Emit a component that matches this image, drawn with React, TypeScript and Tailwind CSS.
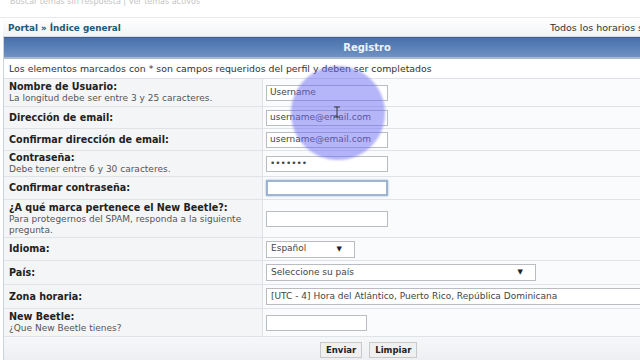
const font = { fontFamily: '"DejaVu Sans", Verdana, sans-serif' };

interface RowProps {
  label: string;
  hint?: string[];
  h: string;
  children: React.ReactNode;
}

function Row({ label, hint, h, children }: RowProps) {
  return (
    <div className={`grid grid-cols-[259px_1fr] border-b border-[#dfe3e8] ${h}`}>
      <div className="bg-[#f4f5f7] border-r border-[#dde1e6] px-[5px] flex flex-col justify-center">
        <div className="text-[9.6px] font-bold text-[#222] leading-[12px]">{label}</div>
        {hint?.map((t) => (
          <div key={t} className="text-[9px] text-[#555] leading-[11px] whitespace-nowrap">
            {t}
          </div>
        ))}
      </div>
      <div className="bg-[#fafbfc] px-[3px] flex items-center">{children}</div>
    </div>
  );
}

function Field({ value, w, focus }: { value?: string; w: string; focus?: boolean }) {
  return (
    <div
      className={`${w} h-[16px] bg-white flex items-center px-[3px] text-[9px] text-[#444] whitespace-nowrap overflow-hidden ${
        focus ? "border-2 border-[#9db4d2] shadow-[0_0_2px_#9db4d2]" : "border border-[#b9bcc0]"
      }`}
    >
      {value}
    </div>
  );
}

function Select({ value, w }: { value: string; w: string }) {
  return (
    <div className={`${w} h-[17px] bg-white border border-[#b9bcc0] flex items-center justify-between px-[4px] text-[9px] text-[#444] whitespace-nowrap overflow-hidden`}>
      <span>{value}</span>
      <span className="text-[7px] text-[#222] pr-[8px]">▼</span>
    </div>
  );
}

export default function App() {
  return (
    <div className="w-[640px] h-[360px] overflow-hidden bg-white relative" style={font}>
      <div className="h-[18px] border-b border-[#e6e8eb] overflow-hidden">
        <div className="text-[8px] text-[#c4c4c4] pl-[10px] leading-[8px] -mt-[2px]">
          Buscar temas sin respuesta | Ver temas activos
        </div>
      </div>
      <div className="w-[730px] pl-[3px]">
        <div className="h-[19px] flex items-center pt-[3px] bg-gradient-to-b from-white to-[#f1f3f6] border-b border-[#d8dde4]">
          <div className="w-[547px] pl-[5px] text-[8.8px] font-bold text-[#1d5878]">Portal » Índice general</div>
          <div className="text-[9.5px] text-[#333] whitespace-nowrap">Todos los horarios son UTC - 4 horas</div>
        </div>
        <div className="border-l border-[#ccd3dc]">
          <div className="h-[22px] flex items-center justify-center bg-gradient-to-b from-[#4a72aa] via-[#5a80b8] to-[#7192c2] border-t border-[#3c5f90] border-b-2 border-b-[#a8b8cf] text-[10px] font-bold text-[#eef3fb]">
            Registro
          </div>
          <div className="h-[20px] flex items-center pt-[2px] px-[5px] text-[9.4px] text-[#333] bg-white border-b border-[#dfe3e8]">
            Los elementos marcados con * son campos requeridos del perfil y deben ser completados
          </div>
          <Row label="Nombre de Usuario:" hint={["La longitud debe ser entre 3 y 25 caracteres."]} h="h-[28px]">
            <Field value="Username" w="w-[122px]" />
          </Row>
          <Row label="Dirección de email:" h="h-[22px]">
            <Field value="username@email.com" w="w-[122px]" />
          </Row>
          <Row label="Confirmar dirección de email:" h="h-[22px]">
            <Field value="username@email.com" w="w-[122px]" />
          </Row>
          <Row label="Contraseña:" hint={["Debe tener entre 6 y 30 caracteres."]} h="h-[26px]">
            <Field value="•••••••" w="w-[122px]" />
          </Row>
          <Row label="Confirmar contraseña:" h="h-[23px]">
            <Field w="w-[122px]" focus />
          </Row>
          <Row
            label="¿A qué marca pertenece el New Beetle?:"
            hint={["Para protegernos del SPAM, responda a la siguiente", "pregunta."]}
            h="h-[38px]"
          >
            <Field w="w-[122px]" />
          </Row>
          <Row label="Idioma:" h="h-[23px]">
            <Select value="Español" w="w-[89px]" />
          </Row>
          <Row label="País:" h="h-[24px]">
            <Select value="Seleccione su país" w="w-[270px]" />
          </Row>
          <Row label="Zona horaria:" h="h-[24px]">
            <Select value="[UTC - 4] Hora del Atlántico, Puerto Rico, República Dominicana" w="w-[400px]" />
          </Row>
          <Row label="New Beetle:" hint={["¿Que New Beetle tienes?"]} h="h-[28px]">
            <Field w="w-[101px]" />
          </Row>
          <div className="h-[26px] flex items-center bg-gradient-to-b from-[#f6f7f9] to-[#eceef1]">
            <div className="flex gap-[7px] pl-[316px]">
              <div className="h-[16px] px-[5px] flex items-center bg-[#f0f0f0] border border-[#c9c9c9] text-[8.5px] font-bold text-[#222]">
                Enviar
              </div>
              <div className="h-[16px] px-[5px] flex items-center bg-[#f0f0f0] border border-[#c9c9c9] text-[8.5px] font-bold text-[#222]">
                Limpiar
              </div>
            </div>
          </div>
        </div>
      </div>
      <div className="absolute left-[291px] top-[66px] w-[94px] h-[94px] rounded-full bg-[#6b6bf5]/50 blur-[1px] pointer-events-none" />
      <svg className="absolute left-[333px] top-[106px] pointer-events-none" width="8" height="12" viewBox="0 0 8 12">
        <path d="M1 1h6M4 1v10M1 11h6" stroke="#333" strokeWidth="1" fill="none" />
      </svg>
    </div>
  );
}
